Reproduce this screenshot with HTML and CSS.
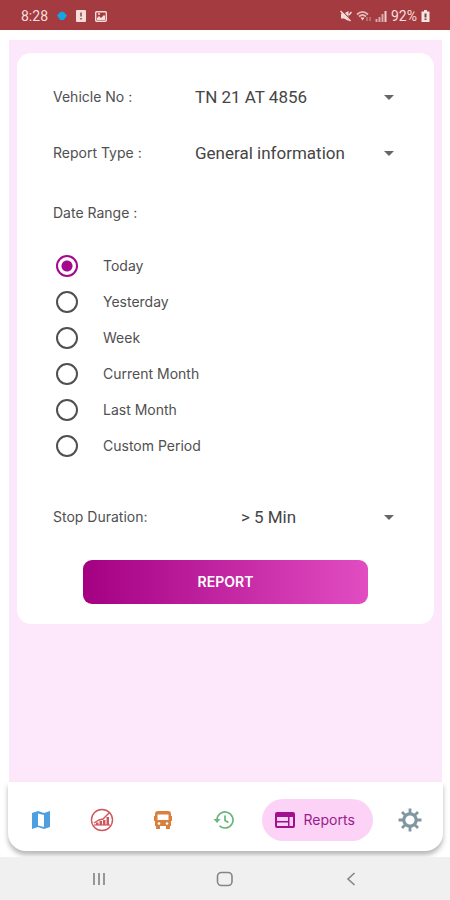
FILE: index.html
```html
<!DOCTYPE html>
<html lang="en">
<head>
<meta charset="utf-8">
<meta name="viewport" content="width=device-width, initial-scale=1">
<title>Reports</title>
<link rel="stylesheet" href="styles.css">
</head>
<body>
<header class="status">
  <div class="status-group">
    <span>8:28</span>
    <svg class="dot" width="10" height="10" viewBox="0 0 10 10"><path d="M3.500 .8h3L10 4.500 6.800 9h-3.500L0 4.500z" fill="#17a4e4"/></svg>
    <svg class="note" width="10" height="12" viewBox="0 0 10 12"><rect width="10" height="12" rx="1" fill="#f6dcd8"/><path d="M5 2.500v4M5 8v1.500" stroke="#a76a69" stroke-width="2"/></svg>
    <svg width="12" height="11" viewBox="0 0 12 11"><rect x=".7" y=".7" width="10.600" height="9.600" rx="1" fill="none" stroke="#f6dcd8" stroke-width="1.400"/><path d="M2 9V7l2-2 2 2 3-3 1 1v4z" fill="#f6dcd8"/><circle cx="4" cy="3" r="1" fill="#f6dcd8"/></svg>
  </div>
  <div class="status-group right">
    <svg width="12" height="12" viewBox="0 0 12 12"><path d="M1 3.500h3L8.500 1v10L4 8.500H1z" fill="#f6dcd8"/><path d="M1 0l10 10" stroke="#a33b40" stroke-width="1.200"/><path d="M.5 1l10 10M9 5l2.500-3" stroke="#f6dcd8" stroke-width="1.500"/></svg>
    <svg width="15" height="12" viewBox="0 0 15 12"><path d="M1 4.500Q6.500-.8 12 4.500M3 6.500q3.500-3 7 0" fill="none" stroke="#e6b9b8" stroke-width="1.800"/><path d="M4.500 7.500h4l-2 3z" fill="#f6dcd8"/><path d="M11 7v4M14 11V7" stroke="#d09a9a"/></svg>
    <svg width="12" height="12" viewBox="0 0 12 12"><path d="M1.500 12V9M4.500 12V7M7.500 12V4" stroke="#d9a9a9" stroke-width="2"/><path d="M10.500 12V1" stroke="#f0cfcd" stroke-width="2"/></svg>
    <span>92%</span>
    <svg width="9" height="12" viewBox="0 0 9 12"><path d="M3 0h3v1.500h2.500V12H.5V1.500H3z" fill="#f8e6e2"/><path d="M4.500 3.500v4M4.500 8.500V10" stroke="#7d4644" stroke-width="2"/></svg>
  </div>
</header>

<main class="page">
  <form class="card">
    <div class="field">
      <label for="vehicle">Vehicle No :</label>
      <div class="picker"><select id="vehicle"><option>TN 21 AT 4856</option></select></div>
    </div>
    <div class="field">
      <label for="type">Report Type :</label>
      <div class="picker"><select id="type"><option>General information</option></select></div>
    </div>
    <fieldset class="range">
      <legend>Date Range :</legend>
      <label class="choice"><input type="radio" name="range" checked>Today</label>
      <label class="choice"><input type="radio" name="range">Yesterday</label>
      <label class="choice"><input type="radio" name="range">Week</label>
      <label class="choice"><input type="radio" name="range">Current Month</label>
      <label class="choice"><input type="radio" name="range">Last Month</label>
      <label class="choice"><input type="radio" name="range">Custom Period</label>
    </fieldset>
    <div class="field">
      <label for="stop">Stop Duration:</label>
      <div class="picker centered"><select id="stop"><option>&gt; 5 Min</option></select></div>
    </div>
    <button class="submit" type="button">REPORT</button>
  </form>
</main>

<footer class="bottom">
  <nav class="tabs">
    <a href="#map" aria-label="Map"><svg width="20" height="20" viewBox="0 0 20 20"><path d="M1 3l6-2 6 2 6-2v16l-6 2-6-2-6 2z" fill="#4d9fe0"/><path d="M7 3.500l6 1.500v12l-6-1.500z" fill="#fff"/></svg></a>
    <a href="#charts" aria-label="Charts"><svg width="24" height="24" viewBox="0 0 24 24"><g fill="none" stroke="#d0565d" stroke-width="1.400"><circle cx="12" cy="12" r="10.500"/><path d="M4 15l5-3 4-1 7-7"/><path d="M4 17h16" stroke-width="1.200"/></g><path d="M6 14.500h2.500V17H6zM9.500 13H12v4H9.500zM13 12h2.500v5H13zM16.500 9H19v8h-2.500z" fill="#d0565d"/></svg></a>
    <a href="#vehicles" aria-label="Vehicles"><svg width="18" height="20" viewBox="0 0 18 20"><path d="M4 1h10q3 0 3 3v12H1V4q0-3 3-3zM2 15h4v4H2zM12 15h4v4h-4zM0 6h2v5H0zM16 6h2v5h-2z" fill="#d9803f"/><path d="M3.500 4.500h11V10h-11z" fill="#fff"/><circle cx="5" cy="13.500" r="1.300" fill="#fff"/><circle cx="13" cy="13.500" r="1.300" fill="#fff"/></svg></a>
    <a href="#history" aria-label="History"><svg width="20" height="18" viewBox="0 0 20 18"><path d="M3 9a8 8 0 1 1 2.500 5.800M11 4.500V9.500l3.500 2" fill="none" stroke="#68b77b" stroke-width="1.700"/><path d="M-.5 8h7L3 12z" fill="#68b77b"/></svg></a>
    <a class="active" href="#reports"><svg width="20" height="16" viewBox="0 0 20 16"><rect x="1" y="1" width="18" height="14" rx="1" fill="none" stroke="#a1118e" stroke-width="2"/><path d="M1 1h18v4H1zM13 5h1.500v10H13zM2 9h11v1.500H2z" fill="#a1118e"/></svg><span>Reports</span></a>
    <a href="#settings" aria-label="Settings"><svg width="24" height="24" viewBox="0 0 24 24"><g stroke="#8097a1" stroke-width="3.200" fill="none"><circle cx="12" cy="12" r="6.200"/><path stroke-width="2.800" d="M12 5V.5M12 19v4.500M5 12H.5M19 12h4.500M7 7L4 4M17 7l3-3M7 17l-3 3M17 17l3 3"/></g></svg></a>
  </nav>
</footer>
<div class="system">
  <button aria-label="Recent apps"><svg width="18" height="16" viewBox="0 0 18 16"><path d="M4 2v12M9 2v12M14 2v12" stroke="#8d8d8d" stroke-width="1.800"/></svg></button>
  <button aria-label="Home"><svg width="18" height="16" viewBox="0 0 18 16"><rect x="1.500" y="1.500" width="14.500" height="13" rx="4" fill="none" stroke="#858585" stroke-width="1.600"/></svg></button>
  <button aria-label="Back"><svg width="10" height="16" viewBox="0 0 10 16"><path d="M8.500 2L2 8l6.500 6" fill="none" stroke="#858585" stroke-width="1.600"/></svg></button>
</div>
</body>
</html>
```
FILE: styles.css
```css
* { box-sizing: border-box; }

body {
  margin: 0;
  min-height: 100vh;
  display: flex;
  flex-direction: column;
  background: #fff;
  color: #505050;
  font: 14px/20px Inter, sans-serif;
}

.status {
  display: flex;
  align-items: center;
  justify-content: space-between;
  height: 30px;
  padding: 2px 20px 0 21px;
  background: #a33b40;
  color: #f8dedc;
  font: 14px/20px Roboto, sans-serif;
}

.status-group {
  display: flex;
  align-items: center;
  gap: 9px;
}

.status-group.right { gap: 4px; }

.page {
  flex: 1;
  margin: 10px 8px 0 9px;
  padding: 13px 8px;
  background: #fde7fa;
}

.card {
  padding: 24px 36px 20px;
  border-radius: 14px;
  background: #fff;
}

.field {
  display: grid;
  grid-template-columns: 142px 1fr;
  align-items: center;
  height: 40px;
}

.field + .field { margin-top: 16px; }

.picker {
  display: flex;
  align-items: center;
}

.picker::after {
  content: "";
  margin-right: 4px;
  border: 5px solid transparent;
  border-top-color: #666;
  border-bottom: 0;
}

.picker select {
  flex: 1;
  min-width: 0;
  height: 32px;
  padding: 0;
  border: 0;
  background: none;
  appearance: none;
  color: #454545;
  font: 17px/24px Roboto, sans-serif;
}

.centered select {
  padding-right: 42px;
  text-align: center;
  text-align-last: center;
}

.range {
  margin: 30px 0 33px;
  padding: 0;
  border: 0;
}

.range legend {
  padding: 0;
  margin-bottom: 25px;
}

.choice {
  display: flex;
  align-items: center;
  gap: 25px;
  height: 36px;
}

.choice input {
  appearance: none;
  flex: none;
  width: 22px;
  height: 22px;
  margin: 0 0 0 3px;
  border: 2px solid #505050;
  border-radius: 50%;
}

.choice input:checked {
  border-color: #a5088c;
  background: radial-gradient(circle, #a5088c 5px, transparent 6px);
}

.submit {
  display: block;
  width: calc(100% - 60px);
  height: 44px;
  margin: 23px auto 0;
  border: 0;
  border-radius: 9px;
  background: linear-gradient(90deg, #a30082, #e24dc2);
  color: #fff;
  font: 600 14px/20px Inter, sans-serif;
}

.bottom {
  padding: 0 7px 6px 8px;
  background: #fff;
}

.tabs {
  display: flex;
  align-items: center;
  height: 69px;
  padding: 7px 2px 0;
  border-radius: 0 0 18px 18px;
  background: #fff;
  box-shadow: 0 4px 5px #b8b8b8;
}

.tabs a {
  display: flex;
  flex: 1;
  align-items: center;
  justify-content: center;
  color: #96208a;
  text-decoration: none;
}

.tabs .active {
  flex: none;
  gap: 9px;
  height: 42px;
  margin: 0 7px;
  padding: 0 18px 0 13px;
  border-radius: 21px;
  background: #fdd2f7;
}

.system {
  display: grid;
  grid-template-columns: repeat(3, 126px);
  justify-content: center;
  height: 43px;
  background: #f0f0f0;
}

.system button {
  display: flex;
  align-items: center;
  justify-content: center;
  padding: 0;
  border: 0;
  background: none;
}
```
